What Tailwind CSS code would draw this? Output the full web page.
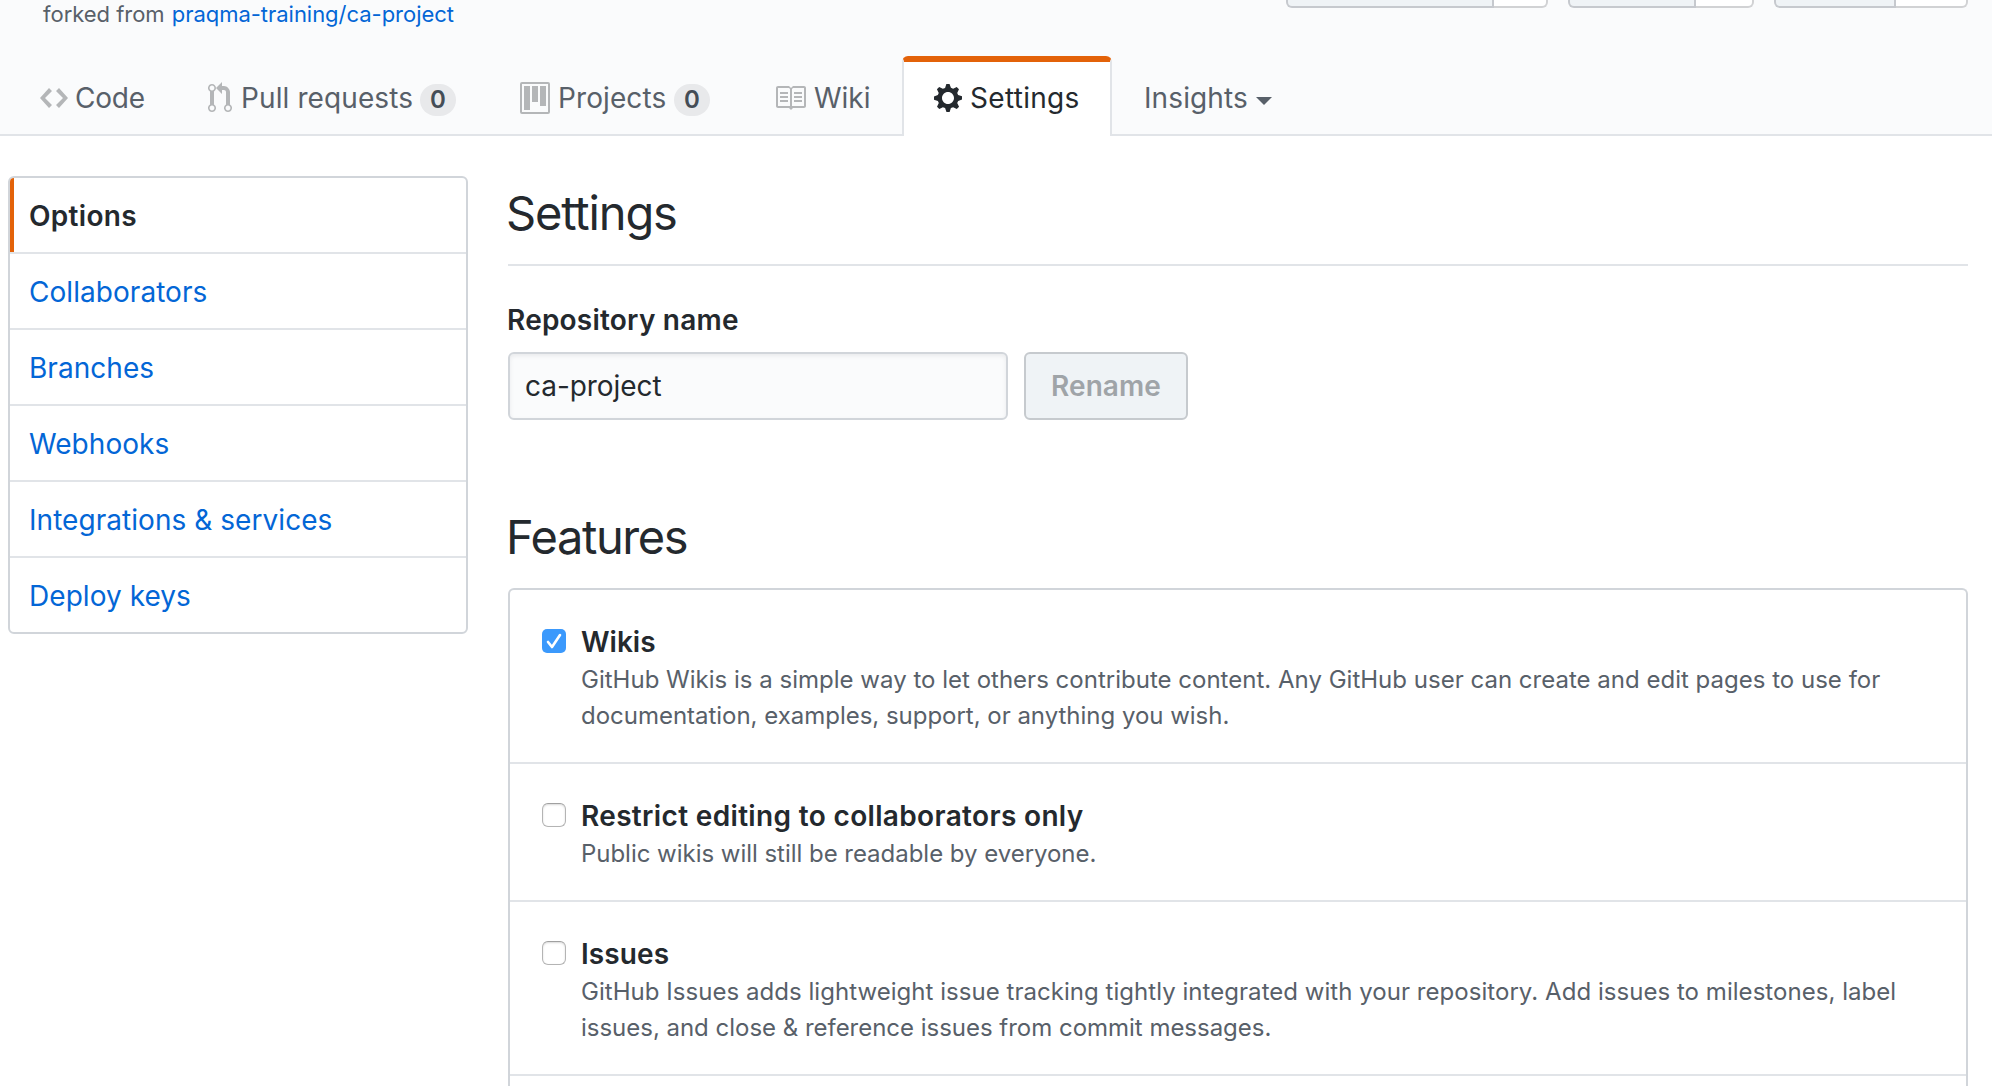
<!DOCTYPE html>
<html lang="en">
<head>
<meta charset="utf-8">
<title>Settings</title>
<script src="https://cdn.jsdelivr.net/npm/@tailwindcss/browser@4"></script>
</head>
<body class="h-[1086px] overflow-hidden bg-white font-['Inter',sans-serif] text-[28px] text-[#24292e]">

<header class="flex h-[136px] flex-col justify-between border-b-2 border-[#e1e4e8] bg-[#fafbfc]">
  <div class="flex h-8 items-start justify-between pr-6 pl-[43px]">
    <p class="text-[22px] leading-7 tracking-[-0.03px] whitespace-nowrap text-[#586069]">forked from <a href="#" class="ml-px text-[#0366d6]">praqma-training/ca-project</a></p>
    <!-- lower edge of the watch / star / fork buttons -->
    <div class="flex h-2 gap-5">
      <div class="flex w-[262px]"><span class="w-[208px] rounded-bl-md border-2 border-t-0 border-[#c6c9ce] bg-[#eff3f6]"></span><span class="flex-1 rounded-br-md border-r-2 border-b-2 border-[#d1d2d4] bg-white"></span></div>
      <div class="flex w-[186px]"><span class="w-[128px] rounded-bl-md border-2 border-t-0 border-[#c6c9ce] bg-[#eff3f6]"></span><span class="flex-1 rounded-br-md border-r-2 border-b-2 border-[#d1d2d4] bg-white"></span></div>
      <div class="flex w-[194px]"><span class="w-[122px] rounded-bl-md border-2 border-t-0 border-[#c6c9ce] bg-[#eff3f6]"></span><span class="flex-1 rounded-br-md border-r-2 border-b-2 border-[#d1d2d4] bg-white"></span></div>
    </div>
  </div>

  <nav class="-mb-0.5 flex h-20 pl-2 leading-[84px] tracking-[0.1px] whitespace-nowrap text-[#586069]">
    <a href="#" class="flex w-[168px] gap-[7px] pl-8">
      <svg class="mt-[26px] h-8 w-7 shrink-0 fill-[#b4b6b8]" viewBox="0 0 14 16"><path d="M9.5 3L8 4.5 11.5 8 8 11.5 9.5 13 14 8 9.5 3zm-5 0L0 8l4.5 5L6 11.5 2.5 8 6 4.5 4.5 3z"/></svg>
      <span class="tracking-[-0.2px]">Code</span>
    </a>
    <a href="#" class="flex w-[312px] pl-8">
      <svg class="mt-[26px] mr-[9px] h-8 w-6 shrink-0 fill-[#b4b6b8]" viewBox="0 0 12 16"><path fill-rule="evenodd" d="M11 11.28V5c-.03-.78-.34-1.47-.94-2.06C9.46 2.35 8.78 2.03 8 2H7V0L4 3l3 3V4h1c.27.02.48.11.69.31.21.2.3.42.31.69v6.28A1.993 1.993 0 0 0 10 15a1.993 1.993 0 0 0 1-3.72zm-1 2.92c-.66 0-1.2-.55-1.2-1.2 0-.65.55-1.2 1.2-1.2.65 0 1.2.55 1.2 1.2 0 .65-.55 1.2-1.2 1.2zM4 3c0-1.11-.89-2-2-2a1.993 1.993 0 0 0-1 3.72v6.56A1.993 1.993 0 0 0 2 15a1.993 1.993 0 0 0 1-3.72V4.72c.59-.34 1-.98 1-1.72zm-.8 10c0 .66-.55 1.2-1.2 1.2-.65 0-1.2-.55-1.2-1.2 0-.65.55-1.2 1.2-1.2.65 0 1.2.55 1.2 1.2zM2 4.2C1.34 4.2.8 3.65.8 3c0-.65.55-1.2 1.2-1.2.65 0 1.2.55 1.2 1.2 0 .65-.55 1.2-1.2 1.2z"/></svg>
      <span class="w-[179px]">Pull requests</span>
      <span class="mt-7 h-8 w-9 rounded-full bg-[#e8e9eb] text-center text-2xl leading-[31px] font-semibold tracking-normal text-[#444d56]">0</span>
    </a>
    <a href="#" class="flex w-[254px] pl-8">
      <svg class="mt-[26px] mr-2 h-8 w-[30px] shrink-0 fill-[#b4b6b8]" viewBox="0 0 15 16"><path fill-rule="evenodd" d="M10 12h3V2h-3v10zm-4-2h3V2H6v8zm-4 4h3V2H2v12zm-1 1h13V1H1v14zM14 0H1a1 1 0 0 0-1 1v14a1 1 0 0 0 1 1h13a1 1 0 0 0 1-1V1a1 1 0 0 0-1-1z"/></svg>
      <span class="w-[116px]">Projects</span>
      <span class="mt-7 h-8 w-9 rounded-full bg-[#e8e9eb] text-center text-2xl leading-[31px] font-semibold tracking-normal text-[#444d56]">0</span>
    </a>
    <a href="#" class="flex w-40 pl-8">
      <svg class="mt-[26px] mr-2 size-8 shrink-0 fill-[#b4b6b8]" viewBox="0 0 16 16"><path fill-rule="evenodd" d="M3 5h4v1H3V5zm0 3h4V7H3v1zm0 2h4V9H3v1zm11-5h-4v1h4V5zm0 2h-4v1h4V7zm0 2h-4v1h4V9zm2-6v9c0 .55-.45 1-1 1H9.5l-1 1-1-1H2c-.55 0-1-.45-1-1V3c0-.55.45-1 1-1h5.5l1 1 1-1H15c.55 0 1 .45 1 1zm-8 .5L7.5 3H2v9h6V3.5zm7-.5H9.5l-.5.5V12h6V3z"/></svg>
      <span class="tracking-normal">Wiki</span>
    </a>
    <a href="#" class="flex w-[210px] gap-2 rounded-t-md border-x-2 border-t-6 border-x-[#e1e4e8] border-t-[#e36209] bg-white pl-[30px] leading-[72px] tracking-[0.3px] text-[#24292e]">
      <svg class="mt-5 h-8 w-7 shrink-0 fill-[#24292e]" viewBox="0 0 14 16"><path fill-rule="evenodd" d="M14 8.77v-1.6l-1.94-.64-.45-1.09.88-1.84-1.13-1.13-1.81.91-1.09-.45-.69-1.92h-1.6l-.63 1.94-1.11.45-1.84-.88-1.13 1.13.91 1.81-.45 1.09L0 7.23v1.59l1.94.64.45 1.09-.88 1.84 1.13 1.13 1.81-.91 1.09.45.69 1.92h1.59l.63-1.94 1.11-.45 1.84.88 1.13-1.13-.92-1.81.47-1.09L14 8.75v.02zM7 11c-1.66 0-3-1.34-3-3s1.34-3 3-3 3 1.34 3 3-1.34 3-3 3z"/></svg>
      <span>Settings</span>
    </a>
    <a href="#" class="flex pl-8">
      <span class="w-28 tracking-[0.1px]">Insights</span>
      <span class="mt-[41px] size-0 border-x-8 border-t-8 border-x-transparent border-t-[#586069]"></span>
    </a>
  </nav>
</header>

<div class="flex items-start gap-10 pt-10 pr-6 pl-2">
  <aside class="flex w-[460px] shrink-0 flex-col divide-y-2 divide-[#e1e4e8] overflow-hidden rounded-md border-2 border-[#d1d5da] leading-[76px] tracking-[0.05px] text-[#0366d6]">
    <a href="#" class="h-[76px] pl-[19px] font-semibold tracking-[0.3px] text-[#24292e] shadow-[inset_4px_0_0_#e36209]">Options</a>
    <a href="#" class="h-[76px] pl-[19px]">Collaborators</a>
    <a href="#" class="h-[76px] pl-[19px]">Branches</a>
    <a href="#" class="h-[76px] pl-[19px]">Webhooks</a>
    <a href="#" class="h-[76px] pl-[19px]">Integrations &amp; services</a>
    <a href="#" class="h-[74px] pl-[19px]">Deploy keys</a>
  </aside>

  <main class="min-w-0 flex-1">
    <h1 class="h-[90px] border-b-2 border-[#e1e4e8] -indent-0.5 text-[47px] leading-[73px] tracking-[-1.15px]">Settings</h1>
    <form>
      <label class="mt-[34px] block h-[52px] -indent-px leading-[40px] font-semibold tracking-[0.22px]">Repository name</label>
      <div class="flex h-[68px] gap-4">
        <input type="text" value="ca-project" class="w-[500px] rounded-md border-2 border-[#d1d5da] bg-[#fafbfc] px-[15px] tracking-[-0.05px] shadow-[inset_0_2px_4px_rgba(27,31,35,0.075)]">
        <button type="button" class="w-[164px] rounded-md border-2 border-[#c6cace] bg-[#eff3f6] font-semibold tracking-[0.1px] text-[#9fa4a8]">Rename</button>
      </div>
    </form>

    <h2 class="mt-[82px] h-[86px] -indent-0.5 text-[47px] leading-[70px] tracking-[-1.4px]">Features</h2>
    <ul class="divide-y-2 divide-[#e1e4e8] rounded-t-md border-2 border-b-0 border-[#d1d5da]">
      <li class="flex h-[174px] gap-[15px] pt-[31px] pl-8">
        <svg class="mt-2 size-6 shrink-0" viewBox="0 0 24 24"><rect width="24" height="24" rx="5" fill="#3b99fc"/><path d="M6 13l4 5 8-12" fill="none" stroke="#fff" stroke-width="2.6" stroke-linecap="round" stroke-linejoin="round"/></svg>
        <div class="whitespace-nowrap">
          <h3 class="h-[41px] leading-[43px] font-semibold">Wikis</h3>
          <p class="text-[24px] leading-9 tracking-[0.01px] text-[#586069]">GitHub Wikis is a simple way to let others contribute content. Any GitHub user can create and edit pages to use for<br><span class="tracking-[-0.02px]">documentation, examples, support, or anything you wish.</span></p>
        </div>
      </li>
      <li class="flex h-[138px] gap-[15px] pt-[31px] pl-8">
        <span class="mt-2 size-6 shrink-0 rounded-md border border-[#b4b4b4] border-t-[#a0a0a0] bg-white shadow-[inset_0_1px_2px_rgba(0,0,0,0.15)]"></span>
        <div class="whitespace-nowrap">
          <h3 class="h-[41px] leading-[43px] font-semibold tracking-[0.34px]">Restrict editing to collaborators only</h3>
          <p class="text-[24px] leading-9 tracking-[-0.03px] text-[#586069]">Public wikis will still be readable by everyone.</p>
        </div>
      </li>
      <li class="flex h-[174px] gap-[15px] pt-[31px] pl-8">
        <span class="mt-2 size-6 shrink-0 rounded-md border border-[#b4b4b4] border-t-[#a0a0a0] bg-white shadow-[inset_0_1px_2px_rgba(0,0,0,0.15)]"></span>
        <div class="whitespace-nowrap">
          <h3 class="h-[41px] leading-[43px] font-semibold tracking-[0.1px]">Issues</h3>
          <p class="text-[24px] leading-9 tracking-[0.04px] text-[#586069]">GitHub Issues adds lightweight issue tracking tightly integrated with your repository. Add issues to milestones, label<br><span class="tracking-[-0.02px]">issues, and close &amp; reference issues from commit messages.</span></p>
        </div>
      </li>
      <li class="h-[10px]"></li>
    </ul>
  </main>
</div>
</body>
</html>
